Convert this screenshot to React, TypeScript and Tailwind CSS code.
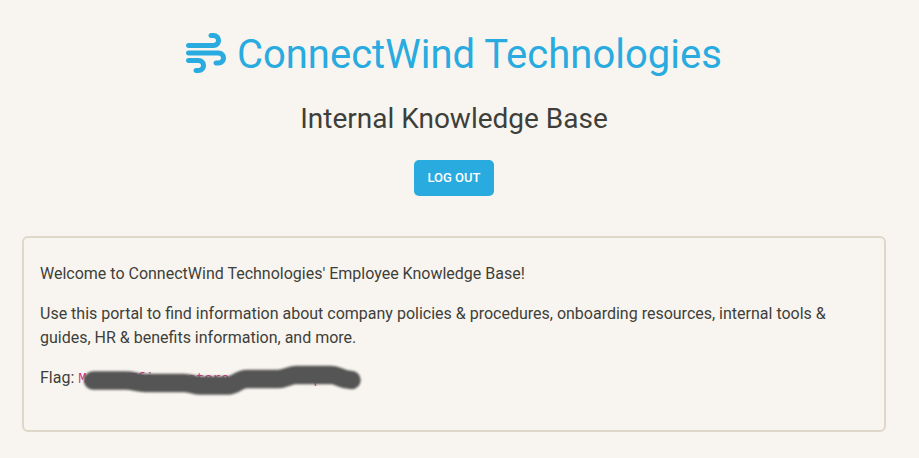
import { FaWind } from "react-icons/fa6";

export default function App() {
  return (
    <div className="h-[458px] w-[919px] overflow-hidden bg-[#f8f5f0] font-['Roboto','Liberation_Sans',sans-serif] text-base text-[#3e3f3a]">
      <main className="ml-[22px] flex w-[864px] flex-col items-center pt-[31px]">
        <h1 className="flex items-start gap-[10.7px] text-[40px] leading-[48px] text-[#29abe0]">
          <FaWind className="mt-[2px] size-10" />
          <span>ConnectWind Technologies</span>
        </h1>
        <h2 className="mt-[23px] text-[28px] leading-[34px]">Internal Knowledge Base</h2>
        <button className="mt-6 h-9 w-20 rounded-[5px] bg-[#29abe0] text-[13px] font-medium leading-[18px] text-white">LOG OUT</button>
        <section className="mt-10 h-[196px] w-full rounded-md border-2 border-[#dfd7ca] px-4 pt-6 leading-6">
          <p>Welcome to ConnectWind Technologies' Employee Knowledge Base!</p>
          <p className="mt-4">
            Use this portal to find information about company policies &amp; procedures, onboarding resources, internal tools &amp; guides, HR &amp; benefits information, and more.
          </p>
          <p className="relative mt-4">
            Flag: <code className="whitespace-pre font-['Liberation_Mono',monospace] text-sm text-[#d63384]">{"M     Tfi    store          p"}</code>
            <svg className="absolute left-[38px] top-[-16px] blur-[1px]" width="300" height="48" viewBox="78 350 300 48" fill="none">
              <path d="M93 380.5H126C134 380.5 137 383 145 383H184C191 383 194 385.5 201 385.5H228C236 385.5 238 379 247 379H278C286 379 289 375 296 375H331C339 375 341 380 351.5 380" stroke="#555" strokeWidth="18.5" strokeLinecap="round" />
            </svg>
          </p>
        </section>
      </main>
    </div>
  );
}
